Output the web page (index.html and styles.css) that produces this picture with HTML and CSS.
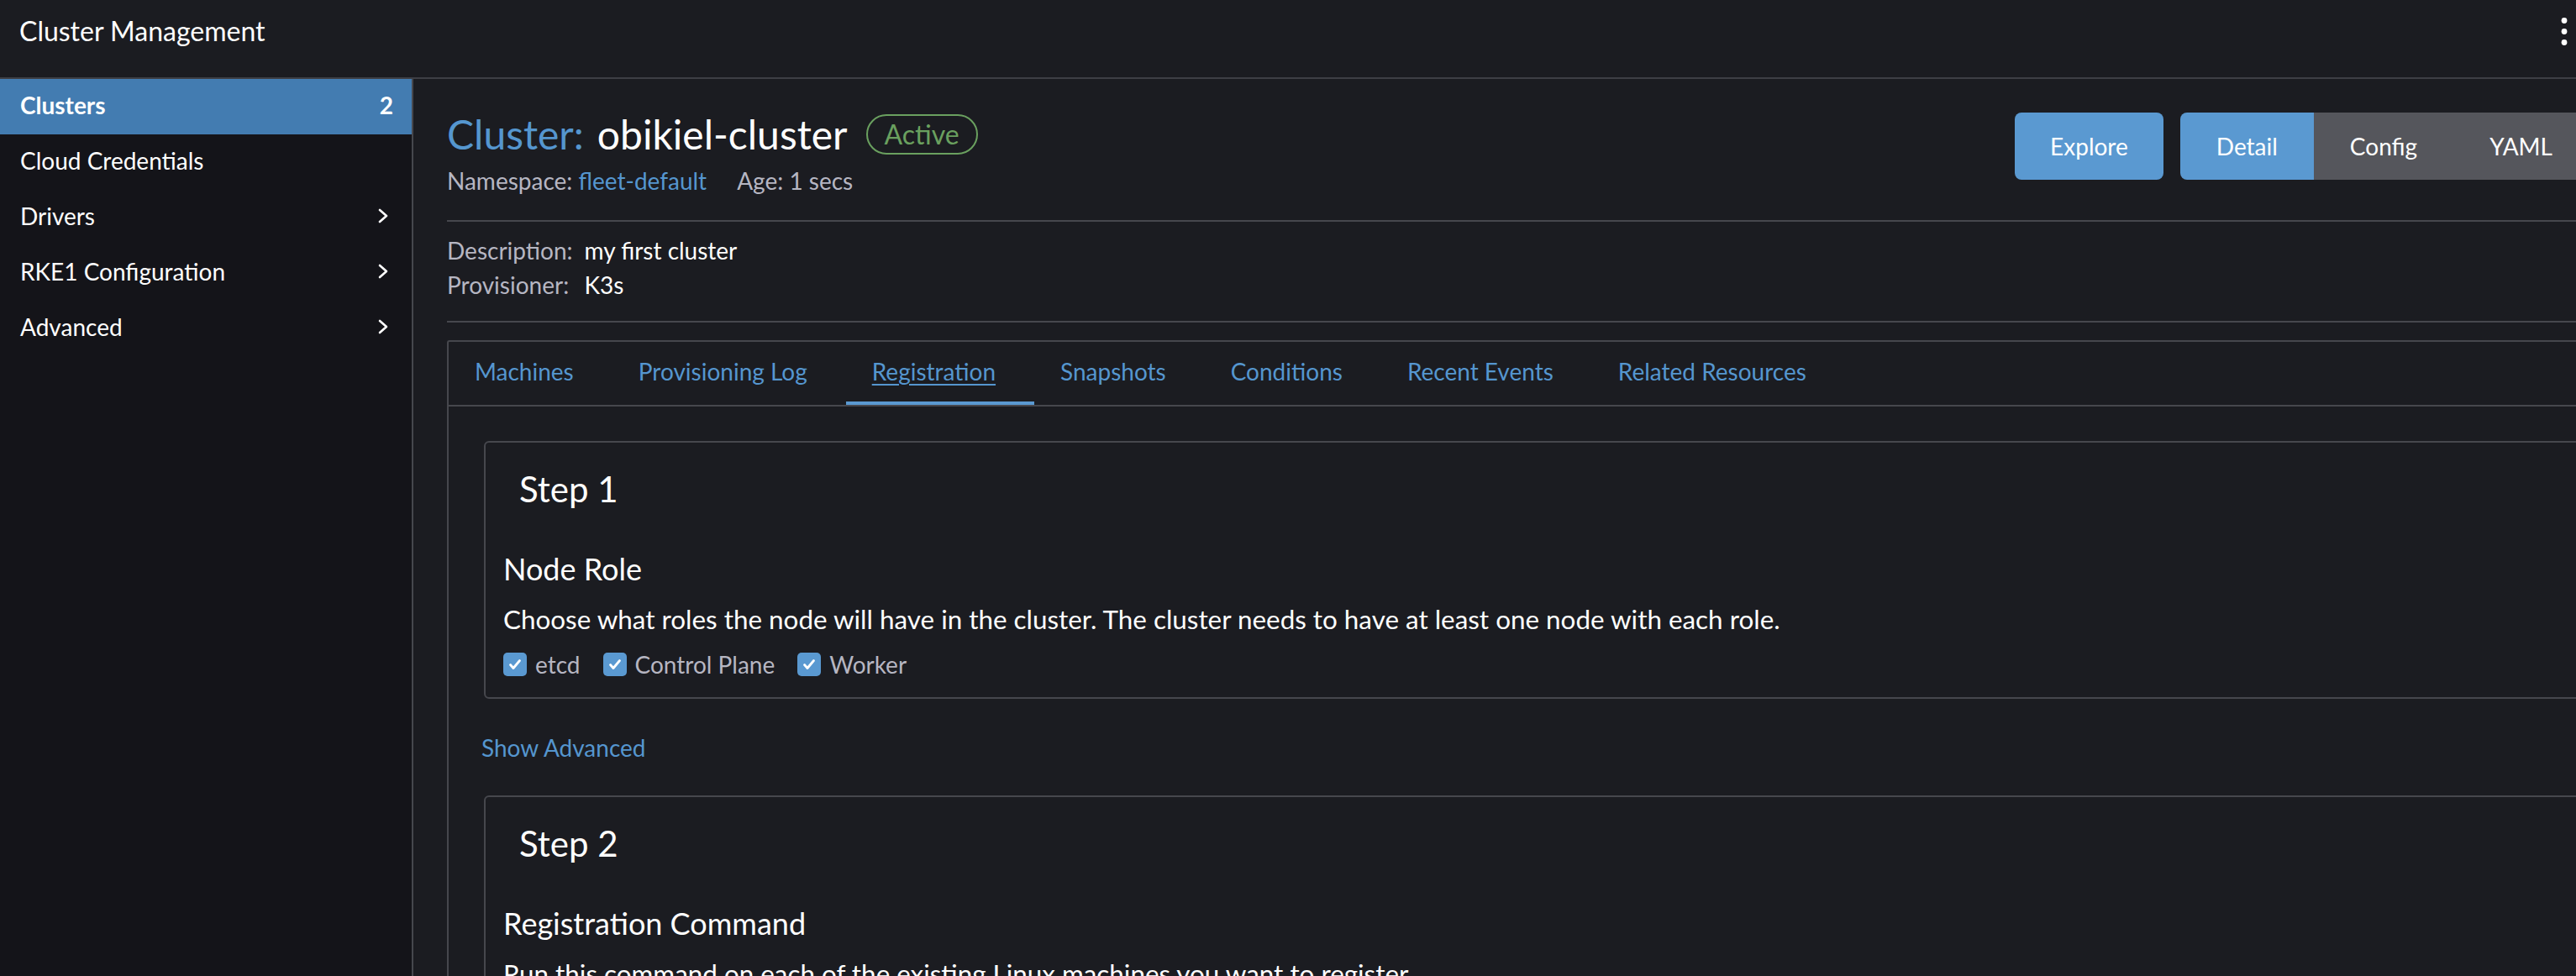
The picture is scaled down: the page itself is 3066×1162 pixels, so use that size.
FILE: index.html
```html
<!DOCTYPE html>
<html lang="en">
<head>
<meta charset="utf-8">
<title>Cluster Management</title>
<link rel="stylesheet" href="styles.css">
</head>
<body>
<header class="topbar">
  <div class="product">Cluster Management</div>
  <div class="kebab">
    <svg width="8" height="34" viewBox="0 0 8 34"><circle cx="4" cy="3.5" r="3.4" fill="#fff"/><circle cx="4" cy="16.5" r="3.4" fill="#fff"/><circle cx="4" cy="29.5" r="3.4" fill="#fff"/></svg>
  </div>
</header>
<div class="layout">
  <nav class="sidebar">
    <a class="nav-item active"><span>Clusters</span><span class="count">2</span></a>
    <a class="nav-item"><span>Cloud Credentials</span></a>
    <a class="nav-item"><span>Drivers</span><svg class="chev" width="12" height="18" viewBox="0 0 12 18"><polyline points="2,2 10,9 2,16" fill="none" stroke="#fff" stroke-width="2.6" stroke-linecap="round" stroke-linejoin="round"/></svg></a>
    <a class="nav-item"><span>RKE1 Configuration</span><svg class="chev" width="12" height="18" viewBox="0 0 12 18"><polyline points="2,2 10,9 2,16" fill="none" stroke="#fff" stroke-width="2.6" stroke-linecap="round" stroke-linejoin="round"/></svg></a>
    <a class="nav-item"><span>Advanced</span><svg class="chev" width="12" height="18" viewBox="0 0 12 18"><polyline points="2,2 10,9 2,16" fill="none" stroke="#fff" stroke-width="2.6" stroke-linecap="round" stroke-linejoin="round"/></svg></a>
  </nav>
  <main class="main">
    <div class="page">
      <div class="masthead">
        <div class="title-block">
          <h1 class="title"><span class="type">Cluster:</span><span>obikiel-cluster</span><span class="badge">Active</span></h1>
          <div class="meta"><span class="muted">Namespace:</span> <a class="link">fleet-default</a><span class="muted age">Age: 1 secs</span></div>
        </div>
        <div class="actions">
          <button class="btn">Explore</button>
          <div class="seg">
            <button class="seg-btn on">Detail</button>
            <button class="seg-btn">Config</button>
            <button class="seg-btn">YAML</button>
          </div>
        </div>
      </div>
      <hr class="divider first">
      <dl class="details">
        <dt>Description:</dt><dd>my first cluster</dd>
        <dt>Provisioner:</dt><dd>K3s</dd>
      </dl>
      <hr class="divider second">
      <div class="tabs-box">
        <ul class="tabs">
          <li class="tab">Machines</li>
          <li class="tab">Provisioning Log</li>
          <li class="tab active">Registration</li>
          <li class="tab">Snapshots</li>
          <li class="tab">Conditions</li>
          <li class="tab">Recent Events</li>
          <li class="tab">Related Resources</li>
        </ul>
        <div class="tab-body">
          <section class="step-card">
            <h2 class="step-title">Step 1</h2>
            <h3 class="step-sub">Node Role</h3>
            <p class="step-desc">Choose what roles the node will have in the cluster. The cluster needs to have at least one node with each role.</p>
            <div class="checks">
              <label class="check"><span class="box"><svg width="16" height="14" viewBox="0 0 16 14"><polyline points="2.5,7.5 6,11.5 13.5,2.5" fill="none" stroke="#fff" stroke-width="2.8" stroke-linecap="round" stroke-linejoin="round"/></svg></span>etcd</label>
              <label class="check"><span class="box"><svg width="16" height="14" viewBox="0 0 16 14"><polyline points="2.5,7.5 6,11.5 13.5,2.5" fill="none" stroke="#fff" stroke-width="2.8" stroke-linecap="round" stroke-linejoin="round"/></svg></span>Control Plane</label>
              <label class="check"><span class="box"><svg width="16" height="14" viewBox="0 0 16 14"><polyline points="2.5,7.5 6,11.5 13.5,2.5" fill="none" stroke="#fff" stroke-width="2.8" stroke-linecap="round" stroke-linejoin="round"/></svg></span>Worker</label>
            </div>
          </section>
          <a class="link show-adv">Show Advanced</a>
          <section class="step-card step2">
            <h2 class="step-title">Step 2</h2>
            <h3 class="step-sub">Registration Command</h3>
            <p class="step-desc">Run this command on each of the existing Linux machines you want to register.</p>
          </section>
        </div>
      </div>
    </div>
  </main>
</div>
</body>
</html>
```
FILE: styles.css
```css
* { box-sizing: border-box; }
html, body { margin: 0; height: 100%; overflow: hidden; }
body {
  background: #1b1c21;
  color: #fff;
  font-family: Lato, "Noto Sans", "Liberation Sans", sans-serif;
  font-size: 28px;
}

.topbar {
  height: 94px;
  border-bottom: 2px solid #3e3f45;
  display: flex;
  justify-content: space-between;
  align-items: flex-start;
  padding: 18px 10px 0 23px;
}
.product { font-size: 32px; line-height: 38px; }
.kebab { margin-top: 3px; line-height: 0; }

.layout { display: flex; height: calc(100% - 94px); }

.sidebar {
  width: 492px;
  flex: none;
  background: #141419;
  border-right: 2px solid #46474d;
}
.nav-item {
  display: flex;
  justify-content: space-between;
  align-items: center;
  height: 66px;
  padding: 14px 28px 18px 24px;
  line-height: 34px;
  color: #fff;
  text-decoration: none;
}
.nav-item.active { background: #437cb1; font-weight: 700; }
.count { margin-right: -6px; font-weight: 700; }

.main { flex: 1; min-width: 0; overflow: hidden; }
.page { width: calc(100% + 55px); padding: 37px 40px 0 40px; }

.masthead { display: flex; justify-content: space-between; align-items: flex-start; }
.title {
  margin: 0;
  font-size: 48px;
  line-height: 58px;
  font-weight: 400;
  display: flex;
  align-items: center;
}
.title .type { color: #5596cf; margin-right: 16px; }
.badge {
  margin-left: 22px;
  height: 48px;
  display: inline-flex;
  align-items: center;
  padding: 0 20px;
  border: 2px solid #6aa05f;
  border-radius: 24px;
  color: #6aa05f;
  font-size: 32px;
}
.meta { margin-top: 9px; line-height: 34px; }
.muted { color: #b6b6c2; }
.age { margin-left: 36px; }
.link { color: #5596cf; text-decoration: none; }

.actions { display: flex; gap: 20px; margin-top: 3px; }
.btn {
  height: 80px;
  padding: 0 42px;
  border: 0;
  border-radius: 8px;
  background: #5a99d1;
  color: #fff;
  font: inherit;
}
.seg { display: flex; border-radius: 8px; overflow: hidden; }
.seg-btn {
  height: 80px;
  padding: 0 43px;
  border: 0;
  background: #55565c;
  color: #fff;
  font: inherit;
}
.seg-btn.on { background: #5a99d1; }

.divider { border: 0; height: 2px; background: #46474d; margin: 0; }
.divider.first { margin-top: 30px; }
.details {
  display: grid;
  grid-template-columns: max-content 1fr;
  column-gap: 14px;
  margin: 14px 0 0;
  line-height: 41px;
}
.details dt { color: #b6b6c2; }
.details dd { margin: 0; color: #fff; }
.divider.second { margin-top: 22px; }

.tabs-box {
  margin-top: 21px;
  border-top: 2px solid #46474d;
  border-left: 2px solid #46474d;
  border-top-left-radius: 3px;
}
.tabs {
  list-style: none;
  margin: 0;
  padding: 0;
  display: flex;
  border-bottom: 2px solid #46474d;
}
.tab {
  padding: 18px 46px 19px 31px;
  line-height: 34px;
  border-bottom: 4px solid transparent;
  color: #5596cf;
}
.tab.active { border-bottom-color: #5a99d1; text-decoration: underline; text-underline-offset: 4px; }

.tab-body { padding: 41px 0 0 39px; }
.step-card {
  margin-left: 3px;
  border: 2px solid #46474d;
  border-radius: 6px;
  padding: 30px 20px 25px 21px;
}
.step-title { margin: 0; padding-left: 19px; font-size: 42px; line-height: 50px; font-weight: 400; }
.step-sub { margin: 49px 0 0; font-size: 36px; line-height: 42px; font-weight: 400; }
.step-desc { margin: 21px 0 0; font-size: 31.4px; line-height: 36px; }
.checks { display: flex; margin-top: 22px; }
.check { display: flex; align-items: center; line-height: 28px; color: #b6b6c2; margin-right: 27px; }
.box {
  width: 28px;
  height: 28px;
  border-radius: 5px;
  background: #5a99d1;
  margin-right: 10px;
  display: flex;
  align-items: center;
  justify-content: center;
}
.show-adv { display: block; margin-top: 41px; line-height: 34px; }
.step2 { margin-top: 40px; }
```
